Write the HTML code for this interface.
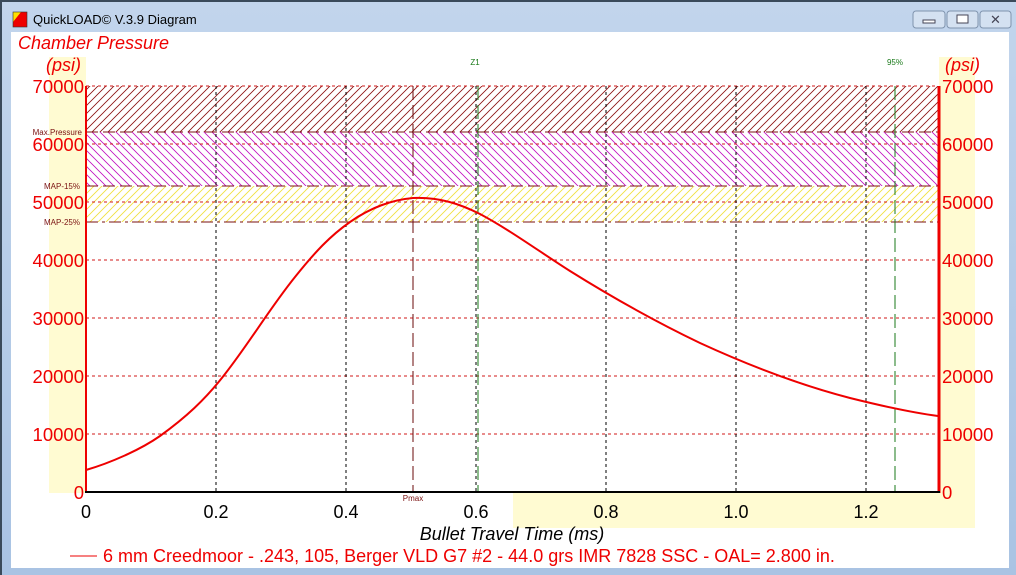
<!DOCTYPE html>
<html><head><meta charset="utf-8"><style>
html,body{margin:0;padding:0;width:1016px;height:575px;overflow:hidden;background:#c9dbef;}
svg{display:block}
text{font-family:"Liberation Sans",Arial,sans-serif}
</style></head><body>
<svg width="1016" height="575" viewBox="0 0 1016 575" xmlns="http://www.w3.org/2000/svg">
<defs>
<linearGradient id="tb" x1="0" y1="0" x2="0" y2="1"><stop offset="0" stop-color="#c2d5ec"/><stop offset="1" stop-color="#a9c3e3"/></linearGradient>
<pattern id="h1" width="8" height="8" patternUnits="userSpaceOnUse"><path d="M-1,9 L9,-1 M-1,1 L1,-1 M7,9 L9,7" stroke="#8b1010" stroke-width="0.8"/></pattern>
<pattern id="h2" width="8" height="8" patternUnits="userSpaceOnUse"><path d="M-1,-1 L9,9 M7,-1 L9,1 M-1,7 L1,9" stroke="#c010c0" stroke-width="0.8"/></pattern>
<pattern id="h3" width="8" height="8" patternUnits="userSpaceOnUse"><path d="M-1,9 L9,-1 M-1,1 L1,-1 M7,9 L9,7" stroke="#f0e040" stroke-width="0.9"/></pattern>
</defs>
<rect x="0" y="0" width="1016" height="575" fill="url(#tb)"/>
<rect x="0" y="0" width="1016" height="2" fill="#3a4a5a"/>
<rect x="0" y="0" width="2" height="575" fill="#3a4a5a"/>
<polygon points="13,12 27,12 27,27 13,27" fill="#e00"/>
<polygon points="13,12 21,12 13,22" fill="#ffe000"/>
<rect x="13" y="12" width="14" height="15" fill="none" stroke="#333" stroke-width="0.6"/>
<text x="33" y="24" font-size="13" fill="#000">QuickLOAD© V.3.9 Diagram</text>
<rect x="913" y="11" width="32" height="17" rx="3" fill="#d4e1f1" stroke="#7f93ad"/>
<rect x="923" y="20" width="12" height="3" fill="#fff" stroke="#445"/>
<rect x="947" y="11" width="31" height="17" rx="3" fill="#d4e1f1" stroke="#7f93ad"/>
<rect x="957" y="15" width="11" height="8" fill="#fff" stroke="#445"/>
<rect x="980" y="11" width="31" height="17" rx="3" fill="#d4e1f1" stroke="#7f93ad"/>
<text x="995.5" y="24" font-size="13" fill="#445" text-anchor="middle">✕</text>
<rect x="11" y="32" width="998" height="536" fill="#fff"/>
<rect x="49" y="57" width="37" height="436" fill="#fffbd2"/>
<rect x="939" y="57" width="36" height="471" fill="#fffbd2"/>
<rect x="513" y="493" width="462" height="35" fill="#fffbd2"/>
<rect x="86" y="86" width="852" height="46" fill="url(#h1)"/>
<rect x="86" y="132" width="852" height="54" fill="url(#h2)"/>
<rect x="86" y="186" width="852" height="36" fill="url(#h3)"/>
<g stroke="#7a1010" stroke-width="1" stroke-dasharray="12,5"><line x1="86" y1="132" x2="938" y2="132"/><line x1="86" y1="186" x2="938" y2="186"/></g>
<line x1="86" y1="222" x2="938" y2="222" stroke="#7a1010" stroke-dasharray="12,4,3,4"/>
<g stroke="#d01818" stroke-width="1" stroke-dasharray="3,3">
<line x1="86" y1="86" x2="938" y2="86"/><line x1="86" y1="144" x2="938" y2="144"/><line x1="86" y1="202" x2="938" y2="202"/><line x1="86" y1="260" x2="938" y2="260"/><line x1="86" y1="318" x2="938" y2="318"/><line x1="86" y1="376" x2="938" y2="376"/><line x1="86" y1="434" x2="938" y2="434"/></g>
<g stroke="#000" stroke-width="1" stroke-dasharray="3,3">
<line x1="216" y1="86" x2="216" y2="492"/><line x1="346" y1="86" x2="346" y2="492"/><line x1="476" y1="86" x2="476" y2="492"/><line x1="606" y1="86" x2="606" y2="492"/><line x1="736" y1="86" x2="736" y2="492"/><line x1="866" y1="86" x2="866" y2="492"/></g>
<line x1="413" y1="86" x2="413" y2="492" stroke="#6a0a0a" stroke-dasharray="14,5"/>
<line x1="478" y1="86" x2="478" y2="492" stroke="#1a7a1a" stroke-dasharray="14,5"/>
<line x1="895" y1="86" x2="895" y2="492" stroke="#1a7a1a" stroke-dasharray="14,5"/>
<text x="475" y="65" font-size="8" fill="#1a7a1a" text-anchor="middle">Z1</text>
<text x="895" y="65" font-size="8" fill="#1a7a1a" text-anchor="middle">95%</text>
<text x="413" y="501" font-size="8" fill="#7a1010" text-anchor="middle">Pmax</text>
<line x1="86" y1="86" x2="86" y2="493" stroke="#e00" stroke-width="2"/>
<line x1="939" y1="86" x2="939" y2="493" stroke="#e00" stroke-width="3"/>
<line x1="85" y1="492" x2="940" y2="492" stroke="#000" stroke-width="2"/>
<path d="M86,470 C110,463 140,450 160,436 C185,418 205,400 225,374 C250,342 270,308 295,277 C315,252 330,236 350,222 C370,208 390,200 413,198 C440,197 460,204 480,214 C510,230 540,252 570,271 C610,296 650,319 700,343 C750,366 800,385 850,398 C890,408 915,413 938,416" fill="none" stroke="#e00" stroke-width="2"/>
<g font-size="18.5" fill="#e00" text-anchor="end">
<text x="84" y="93">70000</text><text x="84" y="151">60000</text><text x="84" y="209">50000</text><text x="84" y="267">40000</text><text x="84" y="325">30000</text><text x="84" y="383">20000</text><text x="84" y="441">10000</text><text x="84" y="499">0</text></g>
<g font-size="18.5" fill="#e00">
<text x="942" y="93">70000</text><text x="942" y="151">60000</text><text x="942" y="209">50000</text><text x="942" y="267">40000</text><text x="942" y="325">30000</text><text x="942" y="383">20000</text><text x="942" y="441">10000</text><text x="942" y="499">0</text></g>
<g font-size="8" fill="#7a1010" text-anchor="end">
<text x="82" y="135">Max.Pressure</text><text x="80" y="189">MAP-15%</text><text x="80" y="225">MAP-25%</text></g>
<text x="18" y="49" font-size="18" font-style="italic" fill="#e00">Chamber Pressure</text>
<text x="81" y="71" font-size="18" font-style="italic" fill="#e00" text-anchor="end">(psi)</text>
<text x="945" y="71" font-size="18" font-style="italic" fill="#e00">(psi)</text>
<g font-size="18" fill="#000" text-anchor="middle">
<text x="86" y="518">0</text><text x="216" y="518">0.2</text><text x="346" y="518">0.4</text><text x="476" y="518">0.6</text><text x="606" y="518">0.8</text><text x="736" y="518">1.0</text><text x="866" y="518">1.2</text></g>
<text x="512" y="540" font-size="18" font-style="italic" fill="#000" text-anchor="middle">Bullet Travel Time (ms)</text>
<line x1="70" y1="556" x2="97" y2="556" stroke="#e00" stroke-width="1"/>
<text x="103" y="562" font-size="18" fill="#e00">6 mm Creedmoor - .243, 105, Berger VLD G7 #2 - 44.0 grs IMR 7828 SSC - OAL= 2.800 in.</text>
</svg>
</body></html>
